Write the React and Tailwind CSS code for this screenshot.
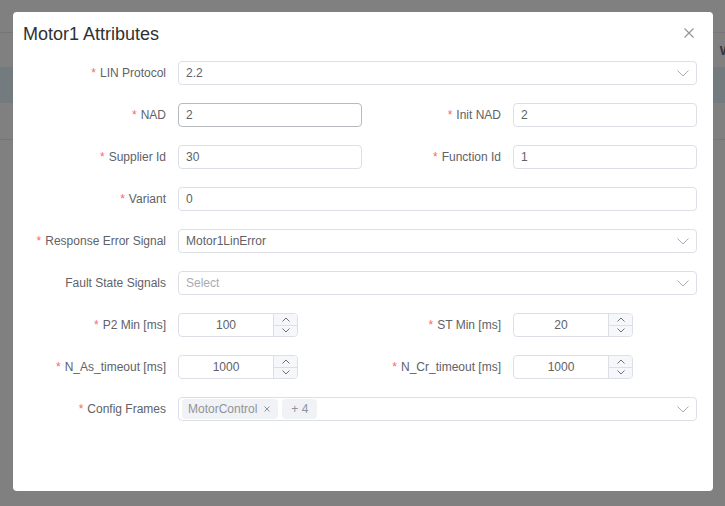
import React from "react";

const Chevron = () => (
  <svg width="12" height="7" viewBox="0 0 12 7" fill="none" className="shrink-0">
    <path d="M0.5 0.5 L6 6 L11.5 0.5" stroke="#a8abb2" strokeWidth="1" />
  </svg>
);

const Label = ({ text, required = true, w = "w-[155px]" }) => (
  <div className={`${w} shrink-0 pr-[12px] flex items-center justify-end text-[12px] text-[#606266] leading-[24px]`}>
    {required && <span className="text-[#f56c6c] mr-[4px]">*</span>}
    <span>{text}</span>
  </div>
);

const Input = ({ value, w = "flex-1", hover = false }) => (
  <div
    className={`${w} h-[24px] rounded-[4px] border ${hover ? "border-[#b7bac1]" : "border-[#dcdfe6]"} bg-white px-[7px] flex items-center text-[12px] text-[#606266]`}
  >
    {value}
  </div>
);

const Select = ({ value, placeholder }) => (
  <div className="flex-1 h-[24px] rounded-[4px] border border-[#dcdfe6] bg-white pl-[7px] pr-[7px] flex items-center text-[12px] text-[#606266]">
    <div className="flex-1 flex items-center gap-[4px] min-w-0">
      {value && <span>{value}</span>}
      {placeholder && <span className="text-[#a8abb2]">{placeholder}</span>}
    </div>
    <Chevron />
  </div>
);

const NumberInput = ({ value }) => (
  <div className="w-[120px] h-[24px] rounded-[4px] border border-[#dcdfe6] bg-white flex text-[12px] text-[#606266] overflow-hidden">
    <div className="flex-1 flex items-center justify-center">{value}</div>
    <div className="w-[24px] border-l border-[#dcdfe6] bg-[#f5f7fa] flex flex-col">
      <div className="flex-1 flex items-center justify-center border-b border-[#dcdfe6]">
        <svg width="8" height="5" viewBox="0 0 8 5" fill="none">
          <path d="M0.5 4.5 L4 1 L7.5 4.5" stroke="#606266" strokeWidth="0.9" />
        </svg>
      </div>
      <div className="flex-1 flex items-center justify-center">
        <svg width="8" height="5" viewBox="0 0 8 5" fill="none">
          <path d="M0.5 0.5 L4 4 L7.5 0.5" stroke="#606266" strokeWidth="0.9" />
        </svg>
      </div>
    </div>
  </div>
);

export default function App() {
  return (
    <div className="relative w-full h-[506px] overflow-hidden bg-[#808080] font-['Liberation_Sans',Arial,sans-serif]">
      {/* page behind overlay */}
      <div className="flex flex-col">
        <div className="h-[32px]" />
        <div className="h-px bg-[#767676]" />
        <div className="h-[34px] flex items-center justify-end">
          <span className="text-[13px] font-bold text-[#2e3742] mr-[-7px] mt-[2px]">W</span>
        </div>
        <div className="h-[36px] bg-[#737b7e]" />
        <div className="h-[36px]" />
        <div className="h-px bg-[#767676]" />
      </div>

      {/* dialog */}
      <div className="absolute left-[13px] top-[12px] w-[700px] h-[479px] bg-white rounded-[4px] flex flex-col">
        <div className="mt-[10px] h-[24px] pl-[10px] pr-[19px] flex items-center justify-between">
          <span className="text-[18px] leading-[24px] text-[#303133]">Motor1 Attributes</span>
          <svg width="10" height="10" viewBox="0 0 10 10" fill="none" className="mt-[-2px]">
            <path d="M0.5 0.5 L9.5 9.5 M9.5 0.5 L0.5 9.5" stroke="#909399" strokeWidth="1.1" />
          </svg>
        </div>

        <div className="mt-[15px] pl-[10px] pr-[16px] flex flex-col gap-[18px]">
          <div className="flex h-[24px]">
            <Label text="LIN Protocol" />
            <Select value="2.2" />
          </div>

          <div className="flex h-[24px]">
            <div className="w-[339px] flex">
              <Label text="NAD" />
              <Input value="2" hover />
            </div>
            <div className="flex-1 flex">
              <Label text="Init NAD" w="w-[151px]" />
              <Input value="2" />
            </div>
          </div>

          <div className="flex h-[24px]">
            <div className="w-[339px] flex">
              <Label text="Supplier Id" />
              <Input value="30" />
            </div>
            <div className="flex-1 flex">
              <Label text="Function Id" w="w-[151px]" />
              <Input value="1" />
            </div>
          </div>

          <div className="flex h-[24px]">
            <Label text="Variant" />
            <Input value="0" />
          </div>

          <div className="flex h-[24px]">
            <Label text="Response Error Signal" />
            <Select value="Motor1LinError" />
          </div>

          <div className="flex h-[24px]">
            <Label text="Fault State Signals" required={false} />
            <Select placeholder="Select" />
          </div>

          <div className="flex h-[24px]">
            <div className="w-[339px] flex">
              <Label text="P2 Min [ms]" />
              <NumberInput value="100" />
            </div>
            <div className="flex-1 flex">
              <Label text="ST Min [ms]" w="w-[151px]" />
              <NumberInput value="20" />
            </div>
          </div>

          <div className="flex h-[24px]">
            <div className="w-[339px] flex">
              <Label text="N_As_timeout [ms]" />
              <NumberInput value="1000" />
            </div>
            <div className="flex-1 flex">
              <Label text="N_Cr_timeout [ms]" w="w-[151px]" />
              <NumberInput value="1000" />
            </div>
          </div>

          <div className="flex h-[24px]">
            <Label text="Config Frames" />
            <div className="flex-1 h-[24px] rounded-[4px] border border-[#dcdfe6] bg-white pl-[3px] pr-[7px] flex items-center text-[12px]">
              <div className="flex-1 flex items-center gap-[4px]">
                <span className="h-[20px] pl-[6px] pr-[8px] rounded-[4px] bg-[#f0f2f5] text-[#909399] text-[12px] flex items-center gap-[7px]">
                  MotorControl
                  <svg width="6" height="6" viewBox="0 0 6 6" fill="none">
                    <path d="M0.5 0.5 L5.5 5.5 M5.5 0.5 L0.5 5.5" stroke="#909399" strokeWidth="1" />
                  </svg>
                </span>
                <span className="h-[20px] px-[9px] rounded-[4px] bg-[#f0f2f5] text-[#909399] text-[12px] flex items-center">
                  + 4
                </span>
              </div>
              <Chevron />
            </div>
          </div>
        </div>
      </div>
    </div>
  );
}
